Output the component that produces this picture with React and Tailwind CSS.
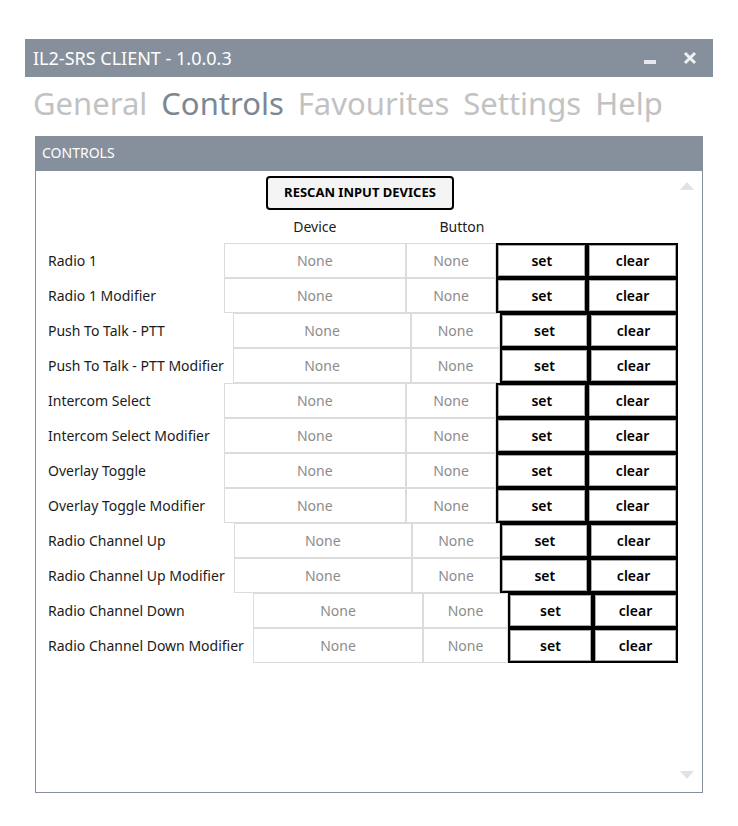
import React from "react";

const groups = [
  { label: "grid-cols-[176px_minmax(0,2fr)_minmax(0,1fr)_minmax(0,1fr)_minmax(0,1fr)]", rows: ["Radio 1", "Radio 1 Modifier"] },
  { label: "grid-cols-[185px_minmax(0,2fr)_minmax(0,1fr)_minmax(0,1fr)_minmax(0,1fr)]", rows: ["Push To Talk - PTT", "Push To Talk - PTT Modifier"] },
  {
    label: "grid-cols-[176px_minmax(0,2fr)_minmax(0,1fr)_minmax(0,1fr)_minmax(0,1fr)]",
    rows: ["Intercom Select", "Intercom Select Modifier", "Overlay Toggle", "Overlay Toggle Modifier"],
  },
  { label: "grid-cols-[186px_minmax(0,2fr)_minmax(0,1fr)_minmax(0,1fr)_minmax(0,1fr)]", rows: ["Radio Channel Up", "Radio Channel Up Modifier"] },
  { label: "grid-cols-[205px_minmax(0,2fr)_minmax(0,1fr)_minmax(0,1fr)_minmax(0,1fr)]", rows: ["Radio Channel Down", "Radio Channel Down Modifier"] },
];

function BindRow({ name }) {
  return (
    <>
      <div className="flex h-[35px] items-center whitespace-nowrap text-[#1b1b1b]">{name}</div>
      <div className="flex items-center justify-center border border-[#dcdcdc] text-[#8c8c8c]">None</div>
      <div className="flex items-center justify-center border border-[#dcdcdc] text-[#8c8c8c]">None</div>
      <button className="flex items-center justify-center border-2 border-black bg-white font-semibold text-black shadow-[inset_0_0_0_1px_#a8a8a8]">
        set
      </button>
      <button className="flex items-center justify-center border-2 border-black bg-white font-semibold text-black shadow-[inset_0_0_0_1px_#a8a8a8]">
        clear
      </button>
    </>
  );
}

export default function App() {
  return (
    <div className="min-h-screen bg-white pl-[25px] pt-[39px] font-['Noto_Sans',sans-serif] text-[14px]">
      <div className="w-[688px]">
        {/* title bar */}
        <div className="flex h-[38px] items-center justify-between bg-[#86909c] pl-[8px] pr-[16px]">
          <span className="text-[18px] text-white">IL2-SRS CLIENT - 1.0.0.3</span>
          <div className="flex items-center gap-[27px]">
            <svg width="12" height="14" viewBox="0 0 12 14">
              <rect x="0" y="9" width="12" height="4" fill="#e6e8eb" />
            </svg>
            <svg width="14" height="14" viewBox="0 0 14 14">
              <path d="M2 2 L12 12 M12 2 L2 12" stroke="#eef0f2" strokeWidth="3" />
            </svg>
          </div>
        </div>

        {/* tabs */}
        <nav className="flex h-[59px] items-center gap-[14px] pb-[6px] pl-[8px] text-[31px] text-[#c2c2c2]">
          <span>General</span>
          <span className="text-[#7c8794]">Controls</span>
          <span>Favourites</span>
          <span>Settings</span>
          <span>Help</span>
        </nav>

        {/* panel */}
        <section className="ml-[10px] flex h-[657px] w-[668px] flex-col border border-[#86909c]">
          <div className="flex h-[34px] items-center bg-[#86909c] pb-[3px] pl-[6px] text-[14px] text-white">CONTROLS</div>
          <div className="flex flex-1">
            <div className="flex-1 pl-[12px]">
              <div className="flex justify-center pr-[6px] pt-[5px]">
                <button className="h-[34px] w-[188px] rounded-[4px] border-2 border-black bg-[#f4f4f4] text-[13px] font-bold text-black">
                  RESCAN INPUT DEVICES
                </button>
              </div>
              <div className="grid h-[33px] grid-cols-[176px_minmax(0,2fr)_minmax(0,1fr)_minmax(0,1fr)_minmax(0,1fr)] items-center text-[#1b1b1b]">
                <span />
                <span className="text-center">Device</span>
                <span className="pl-[22px] text-center">Button</span>
              </div>
              {groups.map((g, i) => (
                <div key={i} className={`grid ${g.label}`}>
                  {g.rows.map((r) => (
                    <BindRow key={r} name={r} />
                  ))}
                </div>
              ))}
            </div>
            <div className="flex w-[24px] flex-col justify-between pb-[13px] pl-[2px] pt-[11px]">
              <svg width="14" height="8" viewBox="0 0 14 8">
                <path d="M0 8 L7 0 L14 8 Z" fill="#e2e2e2" />
              </svg>
              <svg width="14" height="8" viewBox="0 0 14 8">
                <path d="M0 0 L14 0 L7 8 Z" fill="#e2e2e2" />
              </svg>
            </div>
          </div>
        </section>
      </div>
    </div>
  );
}
